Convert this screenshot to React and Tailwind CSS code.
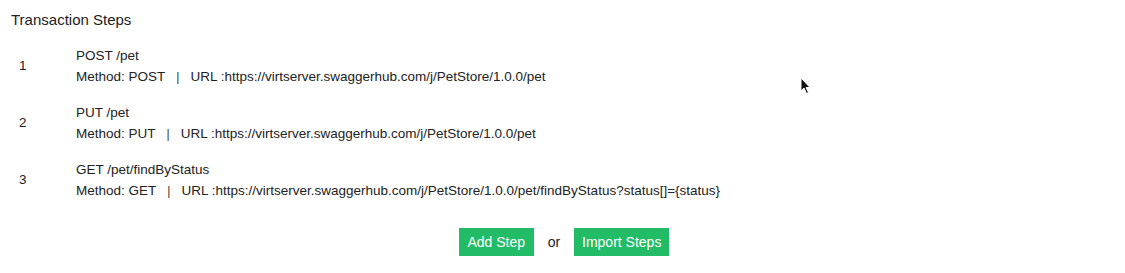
const steps = [
  { n: 1, title: 'POST /pet', method: 'POST', url: 'https://virtserver.swaggerhub.com/j/PetStore/1.0.0/pet' },
  { n: 2, title: 'PUT /pet', method: 'PUT', url: 'https://virtserver.swaggerhub.com/j/PetStore/1.0.0/pet' },
  { n: 3, title: 'GET /pet/findByStatus', method: 'GET', url: 'https://virtserver.swaggerhub.com/j/PetStore/1.0.0/pet/findByStatus?status[]={status}' },
];

export default function App() {
  return (
    <div className="relative w-[1125px] h-[273px] bg-white text-[#222] font-['Liberation_Sans',Arial,sans-serif] overflow-hidden">
      <div className="pt-[10px] pl-[11px] text-[15px] leading-[19px]">Transaction Steps</div>

      {/* Steps */}
      <div className="mt-[18px] flex flex-col gap-[18px]">
        {steps.map((s) => (
          <div key={s.n} className="flex items-center text-[13.5px]">
            <div className="w-[76px] pl-[19px]">{s.n}</div>
            <div className="flex flex-col gap-[4px] leading-[17px]">
              <div>{s.title}</div>
              <div>
                Method: {s.method}
                <span className="mx-[11px] text-[12px] text-[#333]">|</span>
                URL :{s.url}
              </div>
            </div>
          </div>
        ))}
      </div>

      {/* Actions */}
      <div className="mt-[28px] flex justify-center items-center gap-[14px] pl-[3px] text-[14px]">
        <button className="h-[28px] w-[75px] bg-[#22bb66] text-white">Add Step</button>
        <span>or</span>
        <button className="h-[28px] w-[95px] bg-[#22bb66] text-white">Import Steps</button>
      </div>

      {/* Mouse cursor */}
      <svg className="absolute left-[800px] top-[77px]" width="12" height="18" viewBox="0 0 12 18">
        <path d="M1 1 L1 14 L4 11 L6.5 16.5 L8.5 15.5 L6 10.5 L10 10.5 Z" fill="#111" stroke="#fff" strokeWidth="1" />
      </svg>
    </div>
  );
}
